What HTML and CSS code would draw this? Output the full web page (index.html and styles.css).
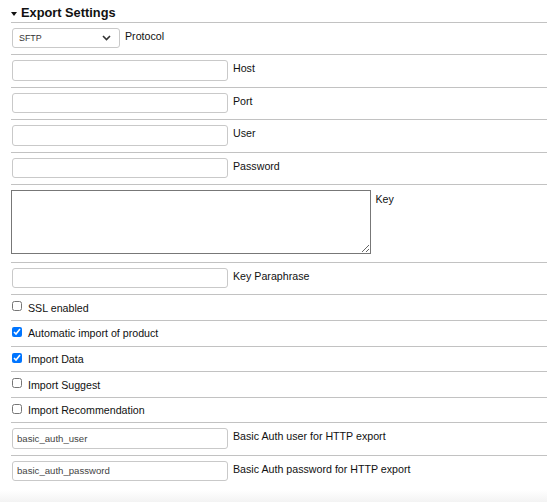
FILE: index.html
```html
<!DOCTYPE html>
<html lang="en">
<head>
<meta charset="utf-8">
<title>Export Settings</title>
<link rel="stylesheet" href="styles.css">
</head>
<body>
<section class="panel">
  <div class="title">
    <svg class="caret" width="6" height="4" viewBox="0 0 6 4"><path d="M0 0H6L3 4Z" fill="#111"/></svg>
    <span>Export Settings</span>
  </div>

  <div class="row field">
    <div class="select-wrap">
      <select class="select"><option>SFTP</option></select>
      <svg class="chevron" width="9" height="6" viewBox="0 0 9 6"><path d="M1 1L4.5 4.5L8 1" fill="none" stroke="#333" stroke-width="1.6"/></svg>
    </div>
    <label class="label">Protocol</label>
  </div>

  <div class="row field">
    <input class="input" type="text">
    <label class="label">Host</label>
  </div>
  <div class="row field">
    <input class="input" type="text">
    <label class="label">Port</label>
  </div>
  <div class="row field">
    <input class="input" type="text">
    <label class="label">User</label>
  </div>
  <div class="row field">
    <input class="input" type="password">
    <label class="label">Password</label>
  </div>
  <div class="row area-row">
    <textarea class="textarea"></textarea>
    <label class="label label-key">Key</label>
  </div>
  <div class="row field">
    <input class="input" type="text">
    <label class="label">Key Paraphrase</label>
  </div>

  <div class="row check-row">
    <input class="check" type="checkbox">
    <label class="check-label">SSL enabled</label>
  </div>
  <div class="row check-row">
    <input class="check" type="checkbox" checked>
    <label class="check-label">Automatic import of product</label>
  </div>
  <div class="row check-row">
    <input class="check" type="checkbox" checked>
    <label class="check-label">Import Data</label>
  </div>
  <div class="row check-row">
    <input class="check" type="checkbox">
    <label class="check-label">Import Suggest</label>
  </div>
  <div class="row check-row">
    <input class="check" type="checkbox">
    <label class="check-label">Import Recommendation</label>
  </div>

  <div class="row field">
    <input class="input" type="text" value="basic_auth_user">
    <label class="label">Basic Auth user for HTTP export</label>
  </div>
  <div class="row field">
    <input class="input" type="text" value="basic_auth_password">
    <label class="label">Basic Auth password for HTTP export</label>
  </div>
</section>
<div class="footer-band"></div>
</body>
</html>
```

FILE: styles.css
```css
* { box-sizing: border-box; }

html, body {
  margin: 0;
  padding: 0;
  background: #ffffff;
}

body {
  font-family: "Liberation Sans", Arial, sans-serif;
  color: #111;
  height: 502px;
  overflow: hidden;
  display: flex;
  flex-direction: column;
}

.panel {
  margin-left: 11px;
  display: flex;
  flex-direction: column;
}

.title {
  height: 22px;
  padding-top: 5px;
  display: flex;
  align-items: flex-start;
  font-size: 12.8px;
  line-height: 15px;
  font-weight: bold;
  color: #111;
}

.caret {
  margin: 7px 4px 0 0;
  flex: none;
}

.row {
  border-top: 1px solid #c2c2c2;
  display: flex;
  align-items: flex-start;
}

.field {
  height: 32.4px;
  padding-top: 5px;
  gap: 5px;
}

.area-row {
  height: 78px;
  padding-top: 5px;
  gap: 5px;
}

.check-row {
  height: 25.6px;
  padding-top: 6px;
  gap: 6px;
}

.label {
  font-size: 10.67px;
  line-height: 13px;
  padding-top: 2px;
  color: #111;
}

.label-key {
  padding-top: 3.5px;
}

.input {
  margin: 0 0 0 1px;
  width: 216px;
  height: 20.5px;
  border: 1px solid #c9c9c9;
  border-radius: 3px;
  padding: 0 4px;
  font-family: "Liberation Sans", Arial, sans-serif;
  font-size: 9.6px;
  color: #444;
  background: #fff;
  outline: none;
}

.select-wrap {
  position: relative;
  margin-left: 1px;
}

.select {
  appearance: none;
  -webkit-appearance: none;
  width: 108px;
  height: 20px;
  margin: 0;
  border: 1px solid #c9c9c9;
  border-radius: 3px;
  padding: 0 0 0 6px;
  font-family: "Liberation Sans", Arial, sans-serif;
  font-size: 8.9px;
  color: #333;
  background: #fff;
  display: block;
}

.chevron {
  position: absolute;
  right: 9px;
  top: 7px;
  pointer-events: none;
}

.textarea {
  margin: 0;
  width: 359.5px;
  height: 64px;
  border: 1px solid #777;
  border-radius: 0;
  padding: 2px;
  background: #fff;
  font-family: "Liberation Mono", monospace;
  font-size: 10px;
}

.check {
  margin: 0 0 0 1px;
  width: 10px;
  height: 10px;
  flex: none;
}

.check-label {
  font-size: 10.67px;
  line-height: 13px;
  padding-top: 0.5px;
  color: #111;
}

.footer-band {
  margin-top: auto;
  height: 12px;
  background: linear-gradient(#ffffff, #f3f3f3);
}
```
